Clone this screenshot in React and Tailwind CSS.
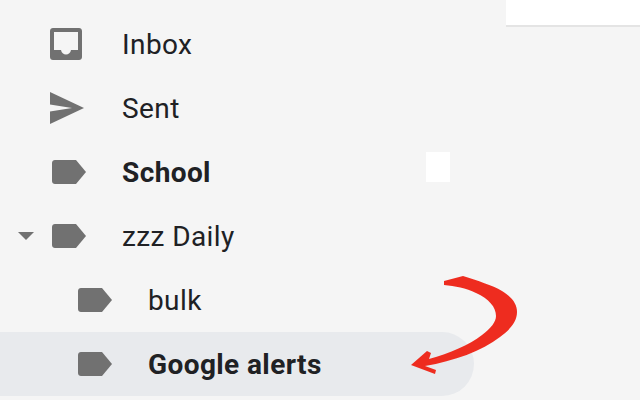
const LabelIcon = () => (
  <svg width="34" height="24" viewBox="0 0 34 24" className="fill-[#717171]">
    <path d="M3 0H24L34 12L24 24H3C1.3 24 0 22.7 0 21V3C0 1.3 1.3 0 3 0Z" />
  </svg>
);

const InboxIcon = () => (
  <svg width="32" height="32" viewBox="0 0 32 32" className="fill-[#717171]">
    <path
      fillRule="evenodd"
      d="M3 0H29C30.7 0 32 1.3 32 3V29C32 30.7 30.7 32 29 32H3C1.3 32 0 30.7 0 29V3C0 1.300 1.300 0 3 0ZM4 4V22H11C11.500 24.800 13.500 26.500 16 26.500C18.500 26.500 20.500 24.800 21 22H28V4Z"
    />
  </svg>
);

const SentIcon = () => (
  <svg width="34" height="32" viewBox="0 0 34 32" className="fill-[#717171]">
    <path d="M0 0L34 16L0 32V19.500L22 16L0 12.500Z" />
  </svg>
);

const rows = [
  { name: "Inbox", icon: <InboxIcon />, iconClass: "ml-[50px] w-[72px]" },
  { name: "Sent", icon: <SentIcon />, iconClass: "ml-[50px] w-[72px]" },
  { name: "School", icon: <LabelIcon />, iconClass: "ml-[52px] w-[70px]", bold: true },
  { name: "zzz Daily", icon: <LabelIcon />, iconClass: "ml-[18px] w-[70px]", caret: true },
  { name: "bulk", icon: <LabelIcon />, iconClass: "ml-[78px] w-[70px]" },
  { name: "Google alerts", icon: <LabelIcon />, iconClass: "ml-[78px] w-[70px]", bold: true, active: true },
];

export default function App() {
  return (
    <div className="relative h-[400px] w-[640px] overflow-hidden bg-[#f5f5f5] pt-3 font-['Roboto',sans-serif]">
      <div className="absolute right-0 top-0 h-[27px] w-[134px] border-b-2 border-[#e4e4e4] bg-white" />
      <div className="absolute left-[426px] top-[152px] h-[30px] w-[24px] bg-white" />

      <ul className="w-[474px]">
        {rows.map((row) => (
          <li
            key={row.name}
            className={`flex h-16 items-center rounded-r-[32px] text-[28px] tracking-[0.4px] text-[#202124] ${
              row.active ? "bg-[#e8eaed]" : ""
            } ${row.bold ? "font-bold" : ""}`}
          >
            {row.caret && (
              <span className="ml-[18px] h-0 w-0 border-x-[8px] border-t-[8px] border-x-transparent border-t-[#717171]" />
            )}
            <span className={`flex shrink-0 ${row.iconClass}`}>{row.icon}</span>
            <span className="pt-0.5">{row.name}</span>
          </li>
        ))}
      </ul>

      <svg className="absolute left-0 top-0" width="640" height="400" viewBox="0 0 640 400">
        <path
          className="fill-[#ee2c1f]"
          d="M444 281L463 276C478 281 492 285 502 291C512 297 517 304 517 312C517 323 508 331 500 337C482 351 454 361 425 366L436 370L435 374L411 365L427 351L431 353L429 359C450 353 469 345 482 335C491 328 496 322 496 316C496 307 489 299 476 293C466 288 455 286 444 285Z"
        />
      </svg>
    </div>
  );
}
